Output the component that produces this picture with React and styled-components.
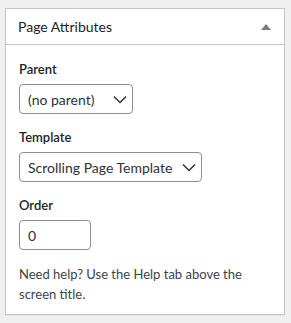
import React from "react";
import styled, { createGlobalStyle } from "styled-components";

const GlobalStyle = createGlobalStyle`
  html, body {
    margin: 0;
    padding: 0;
    background: #f0f0f1;
  }
  body {
    font-family: Lato, "Noto Sans", sans-serif;
    color: #1d2327;
  }
`;

function Chevron() {
  return (
    <ChevronIcon width="16" height="16" viewBox="0 0 16 16" aria-hidden="true">
      <path d="M2 5.5l6 6 6-6" fill="none" stroke="#2c3338" strokeWidth="1.5" />
    </ChevronIcon>
  );
}

function App() {
  return (
    <>
      <GlobalStyle />
      <Page>
        <Postbox>
          <Header>
            <Title>Page Attributes</Title>
            <Toggle aria-label="Toggle panel: Page Attributes">
              <svg width="10" height="6" viewBox="0 0 10 6">
                <path d="M0 6L5 0l5 6z" fill="#787c82" />
              </svg>
            </Toggle>
          </Header>
          <Inside>
            <Label>Parent</Label>
            <SelectWrap $width={114}>
              <Select defaultValue="">
                <option value="">(no parent)</option>
              </Select>
              <Chevron />
            </SelectWrap>

            <Label>Template</Label>
            <SelectWrap $width={183}>
              <Select defaultValue="scrolling">
                <option value="scrolling">Scrolling Page Template</option>
              </Select>
              <Chevron />
            </SelectWrap>

            <Label>Order</Label>
            <NumberInput type="text" defaultValue="0" />

            <Help>Need help? Use the Help tab above the screen title.</Help>
          </Inside>
        </Postbox>
      </Page>
    </>
  );
}

export default App;

const Page = styled.div`
  padding: 8px 6px 9px 5px;
`;

const Postbox = styled.div`
  background: #fff;
  border: 1px solid #c3c4c7;
  box-shadow: 0 1px 1px rgba(0, 0, 0, 0.04);
`;

const Header = styled.div`
  display: flex;
  align-items: center;
  justify-content: space-between;
  height: 35px;
  border-bottom: 1px solid #c3c4c7;
`;

const Title = styled.h2`
  margin: 0;
  padding: 0 12px;
  font-size: 14px;
  font-weight: 400;
  line-height: 1.4;
  color: #1d2327;
`;

const Toggle = styled.button`
  display: flex;
  align-items: center;
  justify-content: center;
  width: 36px;
  height: 35px;
  padding: 0;
  border: 0;
  background: none;
`;

const Inside = styled.div`
  display: flex;
  flex-direction: column;
  align-items: flex-start;
  padding: 15px 12px 10px 13px;
`;

const Label = styled.p`
  margin: 0 0 5px;
  font-size: 13px;
  font-weight: 600;
  line-height: 19px;
  color: #1d2327;
`;

const SelectWrap = styled.span`
  position: relative;
  display: inline-flex;
  width: ${(p) => p.$width}px;
  margin-bottom: 14px;
`;

const Select = styled.select`
  appearance: none;
  width: 100%;
  height: 30px;
  padding: 0 24px 0 8px;
  border: 1px solid #8c8f94;
  border-radius: 4px;
  background: #fff;
  font-family: inherit;
  font-size: 14px;
  color: #2c3338;
  outline: none;
`;

const ChevronIcon = styled.svg`
  position: absolute;
  right: 5px;
  top: 7px;
  pointer-events: none;
`;

const NumberInput = styled.input`
  box-sizing: border-box;
  width: 72px;
  height: 30px;
  padding: 0 8px;
  border: 1px solid #8c8f94;
  border-radius: 4px;
  font-family: inherit;
  font-size: 14px;
  color: #2c3338;
  margin-bottom: 14px;
  outline: none;
`;

const Help = styled.p`
  margin: 0;
  font-size: 13px;
  line-height: 20px;
  color: #3c434a;
`;
